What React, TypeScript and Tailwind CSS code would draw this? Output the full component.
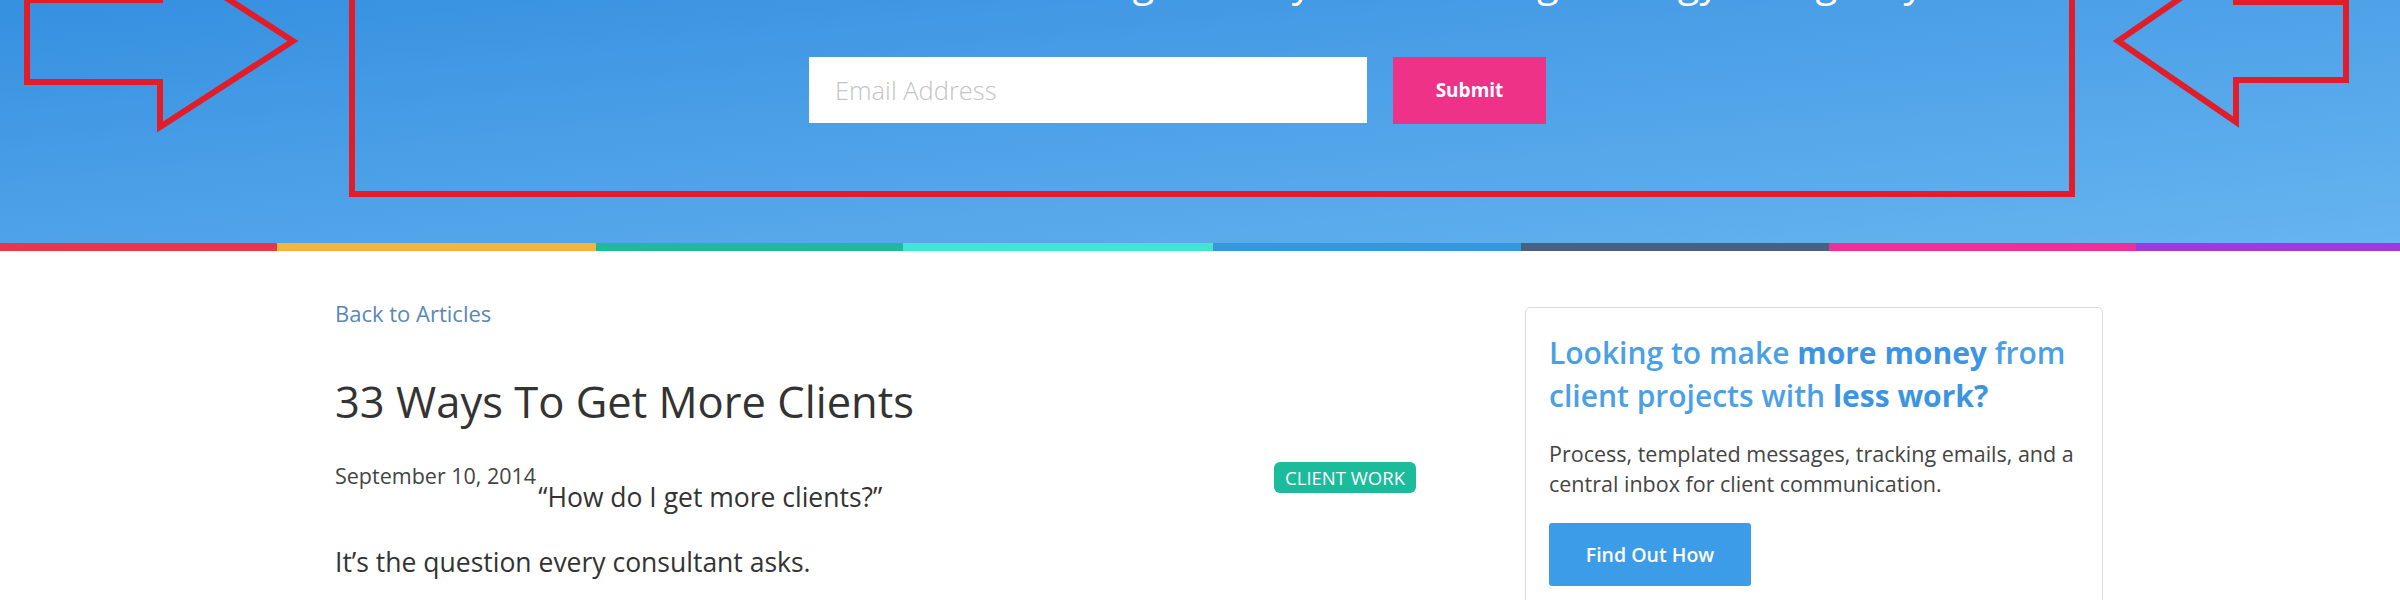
import React from "react";

const stripes = [
  "w-[277px] bg-[#e8374c]",
  "w-[319px] bg-[#f5b43c]",
  "w-[307px] bg-[#1abc9c]",
  "w-[310px] bg-[#3ee8d0]",
  "w-[308px] bg-[#3498db]",
  "w-[308px] bg-[#4a5e86]",
  "w-[307px] bg-[#ee2f9a]",
  "flex-1 bg-[#9b3be0]",
];

// red annotation marks drawn over the hero
function Annotations() {
  return (
    <svg
      className="pointer-events-none absolute left-0 top-0"
      width="2400"
      height="243"
      viewBox="0 0 2400 243"
    >
      <g fill="none" stroke="#e11d2a" strokeWidth="6" strokeLinejoin="miter">
        <polygon points="27,0 160,0 160,-45 293,41 160,127 160,82 27,82" />
        <polygon points="2346,2 2236,2 2236,-40 2118,41 2236,122 2236,80 2346,80" />
        <rect x="352" y="-60" width="1720" height="254" />
      </g>
    </svg>
  );
}

function Hero() {
  return (
    <header className="relative h-[243px] overflow-hidden bg-gradient-to-br from-[#3590e0] to-[#66b4f0]">
      <p className="-mt-[39px] h-[40px] whitespace-nowrap pl-[926px] text-[40px] leading-[40px] text-white">
        Start closing with my own winning strategy that gets you more clients
      </p>
      <form className="mt-[56px] flex gap-[26px] pl-[809px]">
        <input
          type="email"
          placeholder="Email Address"
          className="h-[66px] w-[558px] bg-white pl-[26px] text-[25.5px] font-light text-[#444] placeholder:text-[#c4c4c4] focus:outline-none"
        />
        <button
          type="button"
          className="h-[67px] w-[153px] bg-[#ee3288] text-[19px] font-bold text-white"
        >
          Submit
        </button>
      </form>
      <Annotations />
    </header>
  );
}

function Article() {
  return (
    <div className="w-[1081px] pt-[47px]">
      <a className="block text-[22px] leading-[30px] text-[#5a86b8]">Back to Articles</a>
      <h1 className="mt-[49px] text-[43.5px] leading-[50px] text-[#333]">
        33 Ways To Get More Clients
      </h1>
      <div className="mt-[35px] flex items-start justify-between">
        <div className="flex items-start gap-[2px]">
          <span className="text-[21.5px] leading-[28px] text-[#444]">September 10, 2014</span>
          <p className="mt-[18px] text-[26.5px] leading-[34px] text-[#333]">
            “How do I get more clients?”
          </p>
        </div>
        <span className="flex h-[31px] items-center rounded-[6px] bg-[#1abc9c] px-[11px] text-[18.5px] text-white">
          CLIENT WORK
        </span>
      </div>
      <p className="mt-[30px] text-[26.5px] leading-[36px] text-[#333]">
        It’s the question every consultant asks.
      </p>
    </div>
  );
}

function Sidebar() {
  return (
    <aside className="ml-[109px] mt-[56px] w-[578px]">
      <div className="h-[320px] rounded-[5px] border border-[#dcdcdc] px-[23px] pt-[23px]">
        <h3 className="text-[30px] font-semibold leading-[43px] text-[#4aa0e5]">
          Looking to make <span className="font-bold text-[#3d94e0]">more money</span> from
          <br />
          client projects with <span className="font-bold text-[#3d94e0]">less work?</span>
        </h3>
        <p className="mt-[22px] whitespace-nowrap text-[21.5px] leading-[30px] text-[#444]">
          Process, templated messages, tracking emails, and a
          <br />
          central inbox for client communication.
        </p>
        <button
          type="button"
          className="mt-[24px] h-[63px] w-[202px] rounded-[3px] bg-[#3d9ce8] text-[19.5px] font-semibold text-white"
        >
          Find Out How
        </button>
      </div>
    </aside>
  );
}

export default function App() {
  return (
    <div className="h-[600px] w-[2400px] overflow-hidden bg-white font-['Open_Sans',sans-serif]">
      <Hero />
      <div className="flex h-[8px]">
        {stripes.map((s) => (
          <div key={s} className={s} />
        ))}
      </div>
      <main className="flex pl-[335px]">
        <Article />
        <Sidebar />
      </main>
    </div>
  );
}
